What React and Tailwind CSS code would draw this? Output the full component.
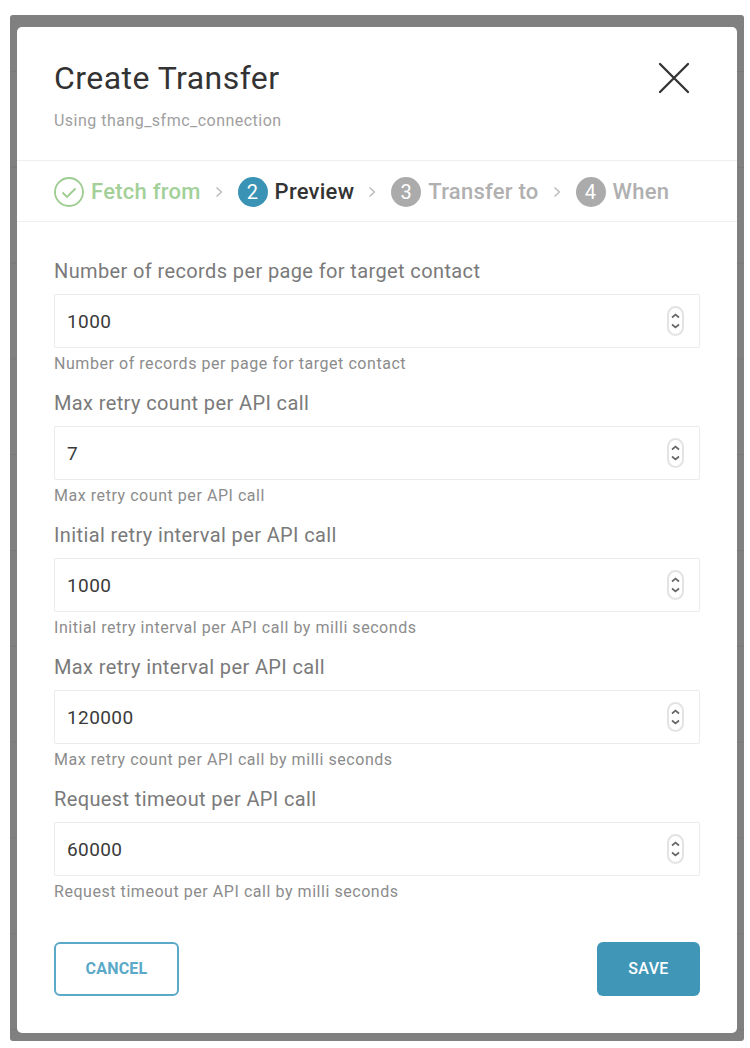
import React from "react";

const fields = [
  ["Number of records per page for target contact", "1000", "Number of records per page for target contact"],
  ["Max retry count per API call", "7", "Max retry count per API call"],
  ["Initial retry interval per API call", "1000", "Initial retry interval per API call by milli seconds"],
  ["Max retry interval per API call", "120000", "Max retry count per API call by milli seconds"],
  ["Request timeout per API call", "60000", "Request timeout per API call by milli seconds"],
];

function Chevron() {
  return (
    <svg width="8" height="14" viewBox="0 0 8 14" fill="none" stroke="#b5b5b5" strokeWidth="1.2" className="block shrink-0 ml-[14px] mr-[15px]">
      <path d="M1.5 2.5L6.5 7l-5 4.5" />
    </svg>
  );
}

function Stepper() {
  return (
    <div className="flex flex-col items-center justify-center w-[17px] h-[30px] rounded-full border-2 border-[#e3e3e3]">
      <svg width="11" height="20" viewBox="0 0 11 20" fill="none" stroke="#666" strokeWidth="1.7">
        <path d="M2 6.5l3.5-3 3.5 3" />
        <path d="M2 13.5l3.5 3 3.5-3" />
      </svg>
    </div>
  );
}

function Num({ n, className }) {
  return (
    <span className={`flex items-center justify-center w-[30px] h-[30px] rounded-full text-white text-[20px] font-normal shrink-0 ${className}`}>
      {n}
    </span>
  );
}

function Field({ label, value, help }) {
  return (
    <div className="h-[132px]">
      <div className="h-[38px] text-[20px] leading-[30px] text-[#7a7a7a] tracking-[0.38px]">{label}</div>
      <div className="flex items-center justify-between h-[54px] pl-[12px] pr-[15px] border border-[#ebebeb] rounded-[2px]">
        <span className="pt-[2px] text-[19px] text-[#3a3a3a] tracking-[0.4px]">{value}</span>
        <Stepper />
      </div>
      <div className="mt-[6px] text-[16px] leading-[20px] text-[#8c8c8c] tracking-[0.55px]">{help}</div>
    </div>
  );
}

export default function App() {
  return (
    <div className="w-[750px] h-[1048px] bg-white pt-[15px] pl-[10px] font-['Roboto',sans-serif]">
      <div className="w-[734px] h-[1026px] bg-[#808080] bg-[linear-gradient(to_bottom,#787878_1px,#808080_1px)] bg-[size:100%_95.8px] bg-[position:0_56px] rounded-[3px] pt-[12px] px-[7px]">
        <div className="w-[720px] h-[1006px] bg-white rounded-[5px]">
          <div className="relative h-[134px] px-[37px] pt-[30px] border-b border-[#eeeeee]">
            <h1 className="text-[32px] leading-[42px] text-[#333333] tracking-[0.45px]">Create Transfer</h1>
            <p className="mt-[12px] text-[16px] leading-[20px] text-[#a0a0a0] tracking-[0.48px]">Using thang_sfmc_connection</p>
            <svg width="32" height="32" viewBox="0 0 32 32" fill="none" stroke="#333" strokeWidth="2.3" strokeLinecap="round" className="absolute right-[47px] top-[35px]">
              <path d="M2 2l28 28M30 2L2 30" />
            </svg>
          </div>
          <div className="h-[61px] flex items-center pl-[37px] pt-[1px] border-b border-[#eeeeee] text-[22px] tracking-[0.25px] font-medium">
            <svg width="30" height="30" viewBox="0 0 30 30" fill="none" stroke="#9ccc90" strokeWidth="1.8" className="shrink-0">
              <circle cx="15" cy="15" r="14" />
              <path d="M8.5 15.5l4.5 4.5 8.5-8.5" />
            </svg>
            <span className="ml-[7px] text-[#a3d098]">Fetch from</span>
            <Chevron />
            <Num n="2" className="bg-[#3a93b5]" />
            <span className="ml-[7px] text-[#333333]">Preview</span>
            <Chevron />
            <Num n="3" className="bg-[#ababab]" />
            <span className="ml-[7px] text-[#b0b0b0]">Transfer to</span>
            <Chevron />
            <Num n="4" className="bg-[#ababab]" />
            <span className="ml-[7px] text-[#b0b0b0]">When</span>
          </div>
          <div className="px-[37px] pt-[34px]">
            {fields.map(([l, v, h]) => (
              <Field key={l} label={l} value={v} help={h} />
            ))}
            <div className="flex justify-between mt-[26px]">
              <button className="w-[125px] h-[54px] border-2 border-[#5aa9c8] rounded-[6px] text-[#5aa9c8] text-[16px] tracking-[0.2px] font-bold">CANCEL</button>
              <button className="w-[103px] h-[54px] bg-[#4096b6] rounded-[6px] text-white text-[16px] tracking-[0.4px] font-medium">SAVE</button>
            </div>
          </div>
        </div>
      </div>
    </div>
  );
}
